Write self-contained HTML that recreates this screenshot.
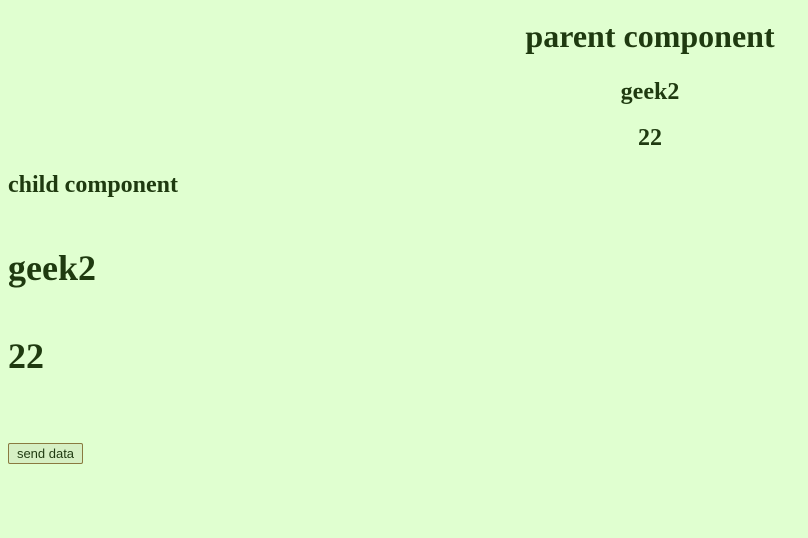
<!DOCTYPE html>
<html><head><style>
body{margin:0;width:808px;height:538px;background:#e0ffd0;font-family:"Liberation Serif",serif;font-weight:bold;color:#1f3a10;position:relative;overflow:hidden}
.t{position:absolute;line-height:1;white-space:nowrap}
.c{left:492px;width:316px;text-align:center}
button{position:absolute;left:8px;top:443px;width:75px;height:21px;padding:0 0 1px;font:13px "Liberation Sans",sans-serif;color:#1f3a10;background:#d6f0c4;border:1px solid #8a7a40;border-radius:2px}
</style></head><body>
<div class="t c" style="top:20px;font-size:32px">parent component</div>
<div class="t c" style="top:80px;font-size:24px">geek2</div>
<div class="t c" style="top:126px;font-size:24px">22</div>
<div class="t" style="left:8px;top:173px;font-size:24px">child component</div>
<div class="t" style="left:8px;top:250px;font-size:36px">geek2</div>
<div class="t" style="left:8px;top:338px;font-size:36px">22</div>
<button>send data</button>
</body></html>
